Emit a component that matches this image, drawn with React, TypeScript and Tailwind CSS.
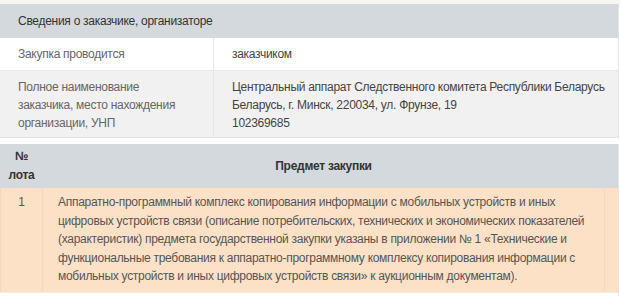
const lotLines = [
  "Аппаратно-программный комплекс копирования информации с мобильных устройств и иных",
  "цифровых устройств связи (описание потребительских, технических и экономических показателей",
  "(характеристик) предмета государственной закупки указаны в приложении № 1 «Технические и",
  "функциональные требования к аппаратно-программному комплексу копирования информации с",
  "мобильных устройств и иных цифровых устройств связи» к аукционным документам).",
];

export default function App() {
  return (
    <div
      className="w-[620px] h-[296px] overflow-hidden bg-white text-[12px] leading-[18px] tracking-[-0.28px]"
      style={{ fontFamily: '"Liberation Sans", Arial, sans-serif' }}
    >
      <div className="h-[4px] bg-[#f6f5ef]" />

      {/* сведения о заказчике */}
      <div className="w-[619px] border-r border-[#e4e4e4]">
        <div className="h-[34px] bg-[#d4d9dd] px-[18px] flex items-center text-[#333]">
          Сведения о заказчике, организаторе
        </div>
        <div className="flex h-[33px] bg-white border-b border-[#e6e6e6]">
          <div className="w-[214px] shrink-0 border-r border-[#e6e6e6] px-[18px] flex items-center text-[#666]">
            Закупка проводится
          </div>
          <div className="px-[18px] flex items-center text-[#444]">заказчиком</div>
        </div>
        <div className="flex bg-[#f1f1f1] border-b border-[#e2e2e2]">
          <div className="w-[214px] shrink-0 border-r border-[#e6e6e6] pl-[18px] pr-[6px] pt-[7px] pb-[5px] text-[#666] whitespace-nowrap">
            <div>Полное наименование</div>
            <div>заказчика, место нахождения</div>
            <div>организации, УНП</div>
          </div>
          <div className="pl-[18px] pr-[4px] pt-[7px] pb-[5px] text-[#444] whitespace-nowrap">
            <div>Центральный аппарат Следственного комитета Республики Беларусь</div>
            <div>Беларусь, г. Минск, 220034, ул. Фрунзе, 19</div>
            <div>102369685</div>
          </div>
        </div>
      </div>

      <div className="h-[6px] bg-white" />

      {/* предмет закупки */}
      <div className="w-[619px] border-r border-[#e4e4e4]">
        <div className="flex h-[44px] bg-[#d4d9dd] text-[#333] font-bold">
          <div className="w-[43px] shrink-0 flex flex-col items-center justify-center leading-[19px]">
            <span>№</span>
            <span>лота</span>
          </div>
          <div className="flex-1 flex items-center justify-center">Предмет закупки</div>
          <div className="w-[14px] shrink-0" />
        </div>
        <div className="flex h-[104px] bg-[#fde1c6] text-[#555] leading-[18.5px]">
          <div className="w-[43px] shrink-0 border-r border-[#f3d8bf] border-l pt-[5px] text-center">1</div>
          <div className="flex-1 pl-[15px] pr-[4px] pt-[5px] whitespace-nowrap">
            {lotLines.map((line) => (
              <div key={line}>{line}</div>
            ))}
          </div>
          <div className="w-[14px] shrink-0 border-l border-[#f3d8bf]" />
        </div>
        <div className="h-[10px] bg-white border-t border-[#ececec]" />
      </div>
    </div>
  );
}
